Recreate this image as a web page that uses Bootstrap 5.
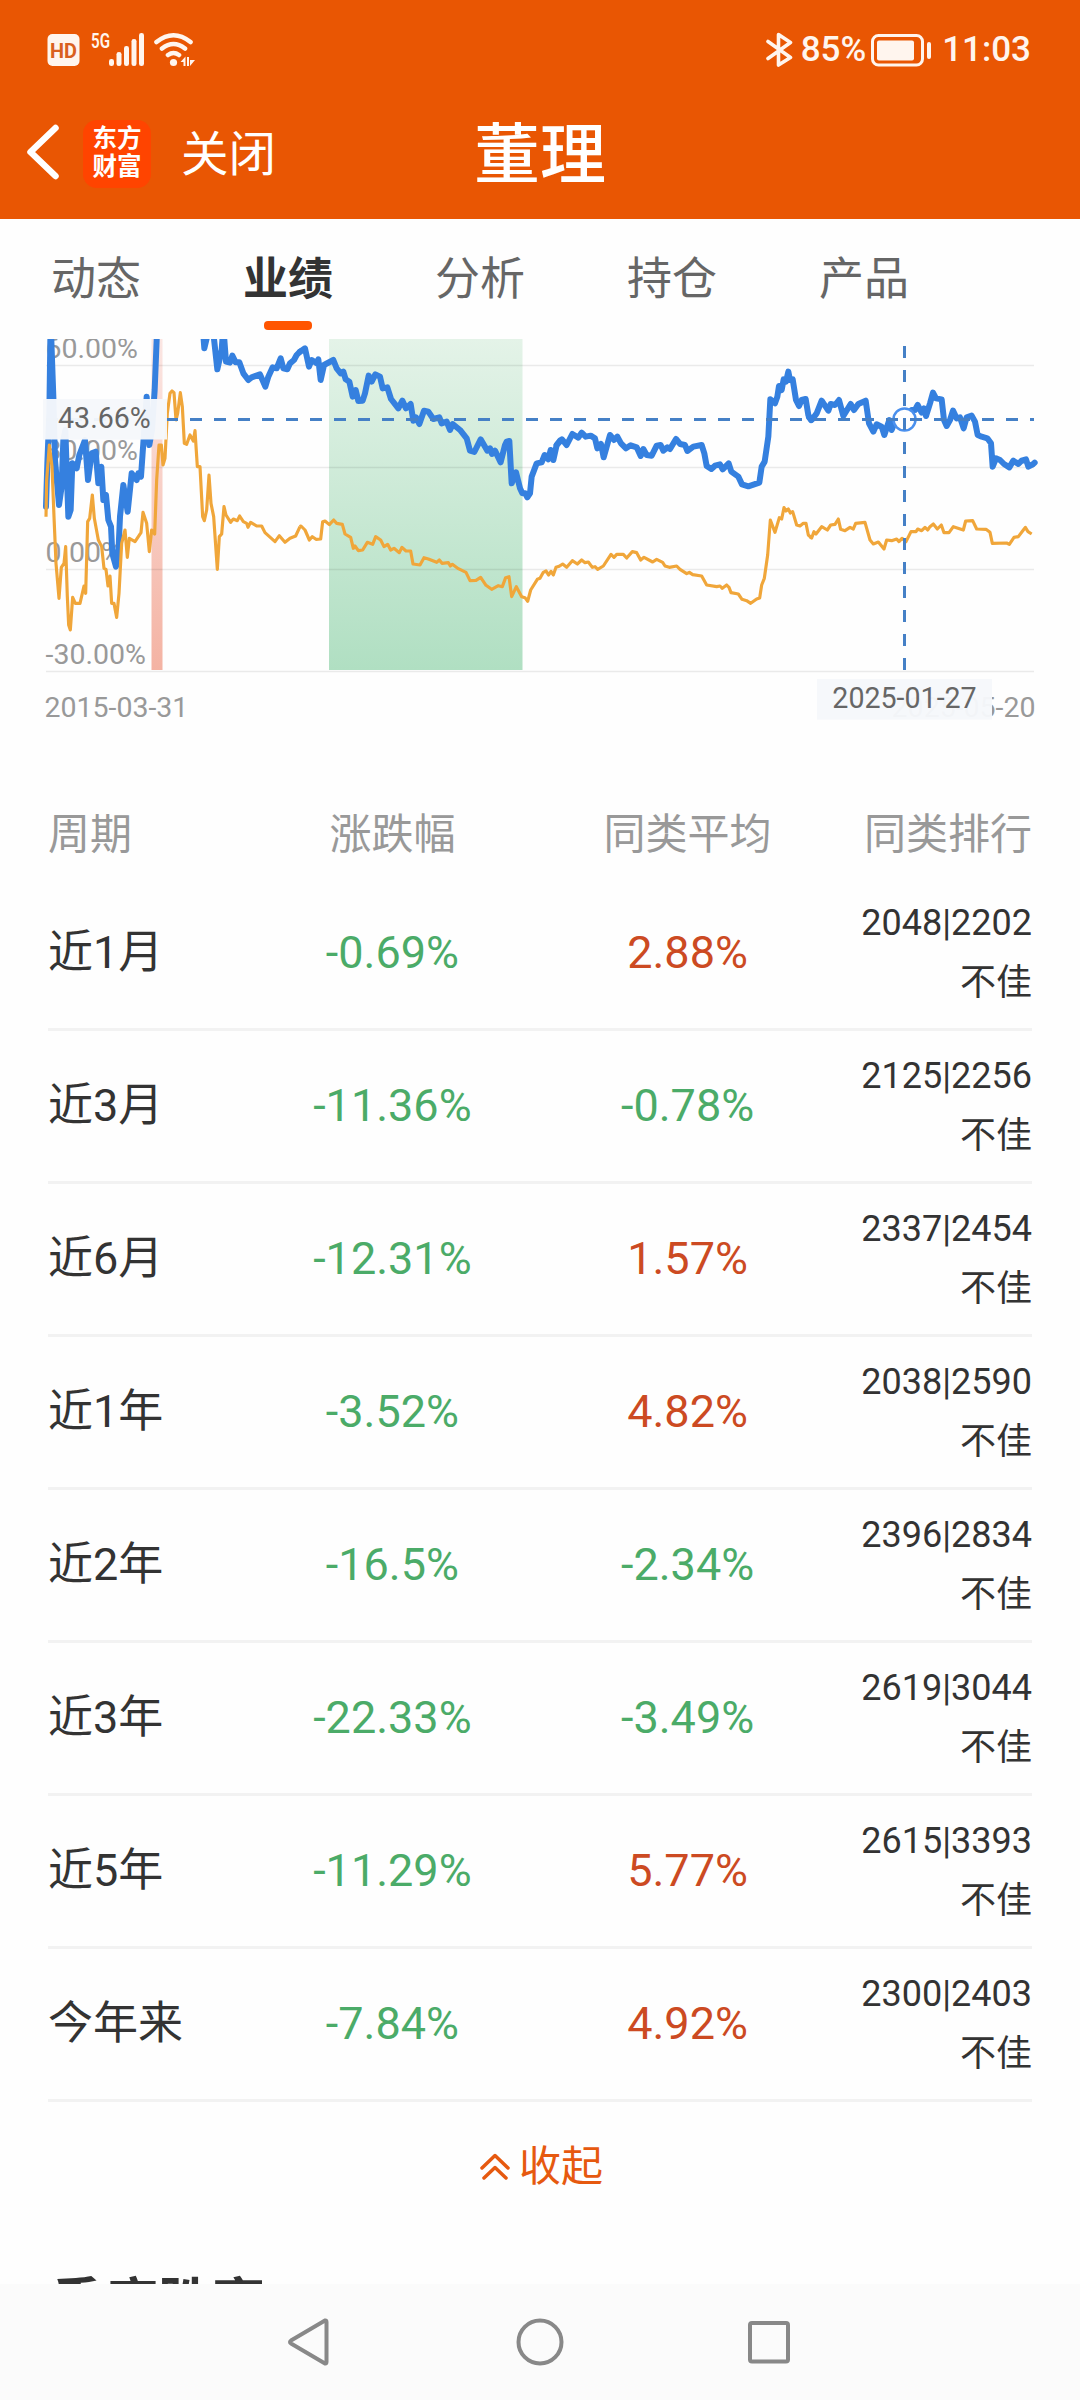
<!DOCTYPE html>
<html lang="zh-CN">
<head>
<meta charset="utf-8">
<meta name="viewport" content="width=device-width, initial-scale=1">
<title>董理</title>
<link href="https://cdn.jsdelivr.net/npm/bootstrap@5.3.0/dist/css/bootstrap.min.css" rel="stylesheet">
<style>
body{font-family:Roboto,"Noto Sans CJK SC",sans-serif;background:#fefefe;color:#333;width:1080px;height:2400px;overflow:hidden}
svg{display:block;flex:none}
.top-area{background:#e95603;color:#fff;height:219px}
.status-bar{height:100px;padding:0 49px 0 47px;color:#fff5ee}
.status-text{font-size:35px;font-weight:500;line-height:40px}
.battery-level{margin:0 2px 0 8px}
.clock{margin-left:10px}
.title-bar{height:107px;padding-left:25px}
.brand-tile{width:68px;height:68px;border-radius:14px;background:#ff4400;font-size:24.5px;line-height:28px;font-weight:700;margin-left:23px;padding-bottom:2px}
.close-link{font-size:47.500px;line-height:60px;margin-left:30px;padding-top:2px}
.page-title{font-size:66px;line-height:80px;font-weight:500;margin-left:198px;padding-top:4px}
.tabs{height:120px}
.tabs a{width:192px;font-size:45px;line-height:66px;padding-top:28px;color:#666;text-decoration:none}
.tabs a.active{color:#333;font-weight:700}
.tabs a.active::after{content:"";width:48px;height:9px;border-radius:4px;background:#ff5500;margin-top:8px}
.axis{font-size:28.500px;fill:#999}
.tip{font-size:28.6px;fill:#666}
.perf{margin:0 48px}
.perf-head{height:84px;font-size:42px;line-height:60px;color:#999;padding-top:11px}
.perf-line{height:153px;border-bottom:3px solid #f2f2f2;font-size:45px}
.c-side{width:20%}
.c-mid{width:30%}
.rank{font-size:36px;line-height:60px}
.up{color:#cc4a22}
.down{color:#4bab68}
.fold{height:130px;color:#e6590f;font-size:42px;line-height:60px;padding-left:3px}
.fold span{margin-left:9px}
.next-section{padding-left:51px}
.next-title{font-size:53.5px;line-height:70px;font-weight:700;height:15px}
.sys-nav{height:116px;background:#fbfbfb}
</style>
</head>
<body class="d-flex flex-column">
<header class="top-area flex-shrink-0">
  <div class="status-bar d-flex align-items-center justify-content-between">
    <svg width="150" height="36" viewBox="47 32 150 36" fill="#fff5ee">
      <rect x="47.5" y="34" width="32" height="32" rx="5"/>
      <text x="50" y="58" font-size="21" font-weight="700" fill="#d9601f" textLength="27" lengthAdjust="spacingAndGlyphs">HD</text>
      <text x="91" y="48" font-size="20" font-weight="600" textLength="19" lengthAdjust="spacingAndGlyphs">5G</text>
      <rect x="109" y="59" width="5" height="7" rx="2.300"/><rect x="116.500" y="52" width="5" height="14" rx="2.300"/><rect x="124" y="46" width="5" height="20" rx="2.300"/><rect x="131.500" y="39" width="5" height="27" rx="2.300"/><rect x="139" y="33" width="5" height="33" rx="2.300"/>
      <g fill="none" stroke="#fff5ee" stroke-width="4.600" stroke-linecap="round"><path d="M156.500 42q17-13.500 34 0M162 48.500q11.500-9 23 0M168 55q5.500-4 11 0"/></g>
      <circle cx="173.500" cy="62.500" r="3.600"/>
      <path d="M180.500 62l5-5.500v9.500h-2v-4zM187 57h2v9h-2zM190 56.500v3.500h5l-5 6z"/>
    </svg>
    <div class="d-flex align-items-center">
      <svg width="28" height="36" viewBox="764 32 28 36" fill="none" stroke="#fff5ee" stroke-width="3.600" stroke-linejoin="round" stroke-linecap="round"><path d="M767 41.500l22.500 16L777.500 65V34.500l12 8L767 58.500"/></svg>
      <span class="status-text battery-level">85%</span>
      <svg width="64" height="36" viewBox="869 31 64 36"><rect x="873.500" y="34.500" width="50" height="29.500" rx="6" fill="none" stroke="#fff5ee" stroke-width="3"/><rect x="878" y="39.500" width="37" height="20" rx="2" fill="#fff5ee"/><rect x="928" y="41" width="4" height="17" rx="2" fill="#fff5ee"/></svg>
      <span class="status-text clock">11:03</span>
    </div>
  </div>
  <div class="title-bar d-flex align-items-center">
    <svg width="35" height="60" viewBox="25 123.500 35 60" fill="none" stroke="#fff" stroke-width="6.500" stroke-linecap="round" stroke-linejoin="round"><path d="M55.500 127.500L30.500 151.500 55.500 175.500"/></svg>
    <div class="brand-tile d-flex flex-column align-items-center justify-content-center"><span>东方</span><span>财富</span></div>
    <span class="close-link">关闭</span>
    <h1 class="page-title mb-0">董理</h1>
  </div>
</header>

<nav class="tabs d-flex flex-shrink-0">
  <a class="d-flex flex-column align-items-center" href="#">动态</a>
  <a class="active d-flex flex-column align-items-center" href="#">业绩</a>
  <a class="d-flex flex-column align-items-center" href="#">分析</a>
  <a class="d-flex flex-column align-items-center" href="#">持仓</a>
  <a class="d-flex flex-column align-items-center" href="#">产品</a>
</nav>

<svg width="1080" height="455" viewBox="0 339 1080 455">
  <defs>
    <linearGradient id="fall" x1="0" y1="0" x2="0" y2="1"><stop offset="0" stop-color="#e4f3e8"/><stop offset="1" stop-color="#b0dfc2"/></linearGradient>
    <linearGradient id="rise" x1="0" y1="0" x2="0" y2="1"><stop offset="0" stop-color="#fbe6e3"/><stop offset="1" stop-color="#f4b3a3"/></linearGradient>
  </defs>
  <rect x="329" y="339" width="193.500" height="331" fill="url(#fall)"/>
  <rect x="151.500" y="339" width="11" height="331" fill="url(#rise)"/>
  <path d="M46 365.500H1034M46 467.500H1034M46 569.500H1034M46 671.500H1034" stroke="#000" stroke-opacity=".08" stroke-width="1.300"/>
  <g class="axis">
    <text x="45.500" y="357.500">60.00%</text><text x="45.500" y="459.500">30.00%</text><text x="45.500" y="561.500">0.00%</text><text x="45.500" y="663.500">-30.00%</text>
    <text x="44.500" y="716.500">2015-03-31</text><text x="1035.500" y="716.500" text-anchor="end">2025-05-20</text>
  </g>
  <!-- fund manager return -->
  <g fill="none" stroke="#3580df" stroke-width="18" stroke-linejoin="round" stroke-linecap="round">
    <path transform="translate(30 330) scale(.33333)" d="M48 530L52 400 58 250 61 30 64 30 70 200 75 390 87 525 95 470 100 330 106 300 115 560 122 540 127 400 140 415 148 375 165 330 174 450 185 370 197 365 205 460 214 410 220 510 228 495 235 570 243 590 247 670 258 710 266 650 270 560 280 465 293 545 305 430 320 450 325 430 333 440 340 340 350 200 358 345 366 300 374 180 380 30 385-100M515-50L523 55 536 0 548-10 562 118 575 60 580-10 588 95 600 98 607 77 617 97 628 97 640 130 655 150 665 142 690 133 706 170 715 140 728 112 740 115 752 85 760 115 772 118 780 100 792 90 800 75 810 65"/>
    <path transform="translate(290 330) scale(.33333)" d="M30 65L45 55 57 110 65 90 80 100 85 88 92 150 102 105 130 90 140 115 152 130 160 125 167 148 178 155 188 200 197 180 205 213 218 212 225 190 236 137 245 155 256 133 270 140 278 175 292 172 303 207 325 235 337 212 348 235 362 222 370 272 378 262 388 282 402 242 415 245 430 267 448 262 455 280 470 275 480 300 488 282 510 300 530 325 540 362 553 366 572 328 585 350 592 362 600 355 606 372 615 362 632 397 645 345 650 335 658 333 665 460 678 427 690 475 697 490 706 490 712 502 720 490 725 440 740 400 755 397 764 375 775 388 782 360 790 390 800 345 810 332"/>
    <path transform="translate(540 330) scale(.33333)" d="M50 345L66 328 80 345 97 312 115 323 125 308 137 320 152 317 165 325 172 355 183 342 191 382 210 315 222 330 232 320 243 340 258 355 272 346 290 352 302 378 310 357 320 375 335 377 350 347 362 345 370 362 382 352 390 357 408 327 420 342 435 345 442 363 460 350 485 345 493 370 500 408 514 417 525 407 540 403 548 418 566 400 574 425 595 440 606 463 625 469 658 458 665 410 674 395 685 320 691 208 705 220 712 200 717 168 725 180 731 148 738 155 745 125 750 150 758 148 768 210 777 228 785 210 797 207 805 255 813 270"/>
    <path transform="translate(800 330) scale(.33333)" d="M27 262L35 270 50 250 65 212 85 242 92 222 105 225 117 210 130 258 152 222 162 240 175 222 197 212 207 280 220 305 230 283 245 290 253 315 268 270 275 300 285 275 300 262 313 265 335 240 345 240 353 225 365 248 372 235 378 258 390 220 399 188 408 205 425 208 432 270 440 288 450 270 459 242 470 265 480 262 491 295 500 262 515 257 525 275 533 315 545 320 562 325 573 340 578 410 588 385 600 390 612 402 628 412 640 392 655 402 665 392 678 388 685 410 700 402 704 398"/>
  </g>
  <!-- category average -->
  <g fill="none" stroke="#f0a63a" stroke-width="9.500" stroke-linejoin="round">
    <path transform="translate(30 330) scale(.33333)" d="M48 560L50 450 58 345 66 410 72 560 78 700 87 805 94 712 102 700 107 650 112 800 116 885 121 900 128 802 136 820 150 820 162 768 167 790 173 575 179 565 187 495 193 565 205 630 215 650 222 715 228 718 234 768 240 738 245 820 252 820 260 862 267 790 275 640 285 600 292 682 298 625 315 635 333 608 339 547 350 580 358 665 365 600 374 612 380 450 387 345 394 345 399 405 405 385 412 250 420 190 426 183 432 188 438 270 443 250 451 188 457 230 463 340 470 343 480 315 490 333 495 302 502 410 510 410 518 560 523 572 530 540 537 435 543 520 551 560 562 718 568 620 575 612 582 530 588 555 602 577 610 567 622 572 629 558 640 575 650 580 654 592 662 577 680 588 695 588 705 608 735 635 748 617 765 637 780 625 797 618 810 590"/>
    <path transform="translate(290 330) scale(.33333)" d="M29 590L33 588 45 600 58 630 67 620 78 628 92 627 98 575 105 573 118 584 131 570 140 580 157 583 165 612 182 622 190 655 195 648 205 662 218 660 232 637 248 643 257 620 272 630 282 650 293 643 302 660 312 655 328 668 336 652 348 663 362 663 369 702 390 705 402 683 415 687 440 697 448 690 456 700 475 698 481 708 487 703 505 716 528 727 540 752 558 751 572 742 588 766 605 778 625 767 637 770 647 743 657 740 665 800 679 770 695 800 705 803 713 814 722 780 742 748 750 745 760 727 768 723 776 735 783 724 790 735 798 712 810 708"/>
    <path transform="translate(540 330) scale(.33333)" d="M59 708L68 702 80 712 97 692 112 702 125 690 135 698 145 696 157 712 165 710 173 718 190 708 213 673 222 682 230 673 250 673 260 684 277 665 290 668 302 690 312 682 338 696 350 688 368 697 375 708 388 712 410 708 420 718 440 731 448 727 458 734 485 738 500 765 530 770 540 768 547 775 560 765 567 772 573 788 595 792 606 808 620 812 632 820 650 807 659 804 665 765 673 745 683 675 691 570 705 607 718 563 725 567 732 533 738 543 745 537 751 549 758 545 770 585 780 588 790 580 798 580 805 615 815 624"/>
    <path transform="translate(800 330) scale(.33333)" d="M30 620L35 624 42 605 48 612 65 590 82 600 92 585 105 583 115 567 122 598 135 602 150 592 160 597 167 580 195 577 210 630 220 642 235 636 252 657 260 630 275 632 290 627 297 635 306 625 318 635 333 605 348 605 353 597 365 602 375 592 383 600 390 590 400 582 412 597 424 585 432 608 447 608 460 590 490 600 497 573 518 572 530 597 558 598 570 607 577 640 620 639 628 643 642 622 655 620 670 600 676 592 684 605 695 612"/>
  </g>
  <!-- crosshair -->
  <circle cx="904.500" cy="419.500" r="11" fill="#fff" stroke="#4a90ee" stroke-width="2.500"/>
  <path d="M46 419.500H1034M904.500 346V670" stroke="#4580c6" stroke-width="3" stroke-dasharray="12 12" fill="none"/>
  <rect x="43" y="399" width="124" height="40.500" fill="#f6f8fb" fill-opacity=".96"/>
  <text class="tip" x="58" y="427.700">43.66%</text>
  <rect x="817" y="679" width="175" height="40.500" fill="#f6f8fb" fill-opacity=".96"/>
  <text class="tip" x="904.500" y="707.700" text-anchor="middle">2025-01-27</text>
</svg>

<main class="perf flex-shrink-0">
  <div class="perf-head d-flex">
    <div class="c-side">周期</div><div class="c-mid text-center">涨跌幅</div><div class="c-mid text-center">同类平均</div><div class="c-side text-end text-nowrap">同类排行</div>
  </div>
  <div class="perf-line d-flex align-items-center"><div class="c-side">近1月</div><div class="c-mid text-center down">-0.69%</div><div class="c-mid text-center up">2.88%</div><div class="c-side text-end rank">2048|2202<br>不佳</div></div>
  <div class="perf-line d-flex align-items-center"><div class="c-side">近3月</div><div class="c-mid text-center down">-11.36%</div><div class="c-mid text-center down">-0.78%</div><div class="c-side text-end rank">2125|2256<br>不佳</div></div>
  <div class="perf-line d-flex align-items-center"><div class="c-side">近6月</div><div class="c-mid text-center down">-12.31%</div><div class="c-mid text-center up">1.57%</div><div class="c-side text-end rank">2337|2454<br>不佳</div></div>
  <div class="perf-line d-flex align-items-center"><div class="c-side">近1年</div><div class="c-mid text-center down">-3.52%</div><div class="c-mid text-center up">4.82%</div><div class="c-side text-end rank">2038|2590<br>不佳</div></div>
  <div class="perf-line d-flex align-items-center"><div class="c-side">近2年</div><div class="c-mid text-center down">-16.5%</div><div class="c-mid text-center down">-2.34%</div><div class="c-side text-end rank">2396|2834<br>不佳</div></div>
  <div class="perf-line d-flex align-items-center"><div class="c-side">近3年</div><div class="c-mid text-center down">-22.33%</div><div class="c-mid text-center down">-3.49%</div><div class="c-side text-end rank">2619|3044<br>不佳</div></div>
  <div class="perf-line d-flex align-items-center"><div class="c-side">近5年</div><div class="c-mid text-center down">-11.29%</div><div class="c-mid text-center up">5.77%</div><div class="c-side text-end rank">2615|3393<br>不佳</div></div>
  <div class="perf-line d-flex align-items-center"><div class="c-side">今年来</div><div class="c-mid text-center down">-7.84%</div><div class="c-mid text-center up">4.92%</div><div class="c-side text-end rank">2300|2403<br>不佳</div></div>
  <div class="fold d-flex align-items-center justify-content-center">
    <svg width="30" height="28" viewBox="480 2154 30 28" fill="none" stroke="#e6590f" stroke-width="3.500" stroke-linecap="round" stroke-linejoin="round"><path d="M482 2169l13-12.500 13 12.500M484 2179l11-10.500 11 10.500"/></svg>
    <span>收起</span>
  </div>
</main>
<section class="next-section flex-fill overflow-hidden d-flex flex-column justify-content-end"><h2 class="next-title mb-0">季度胜率</h2></section>

<footer class="sys-nav flex-shrink-0">
  <svg width="1080" height="116" viewBox="0 2284 1080 116" fill="none" stroke="#888" stroke-width="4" stroke-linejoin="round">
    <path d="M325 2320.500q1.500-.5 1.500 1.500v40q0 2-1.500 1.500l-34-20q-2-1.500 0-3z"/>
    <circle cx="540" cy="2342" r="21.500"/>
    <rect x="750" y="2323" width="38" height="38.500" rx="2"/>
  </svg>
</footer>
<script src="https://cdn.jsdelivr.net/npm/bootstrap@5.3.0/dist/js/bootstrap.bundle.min.js"></script>
</body>
</html>
